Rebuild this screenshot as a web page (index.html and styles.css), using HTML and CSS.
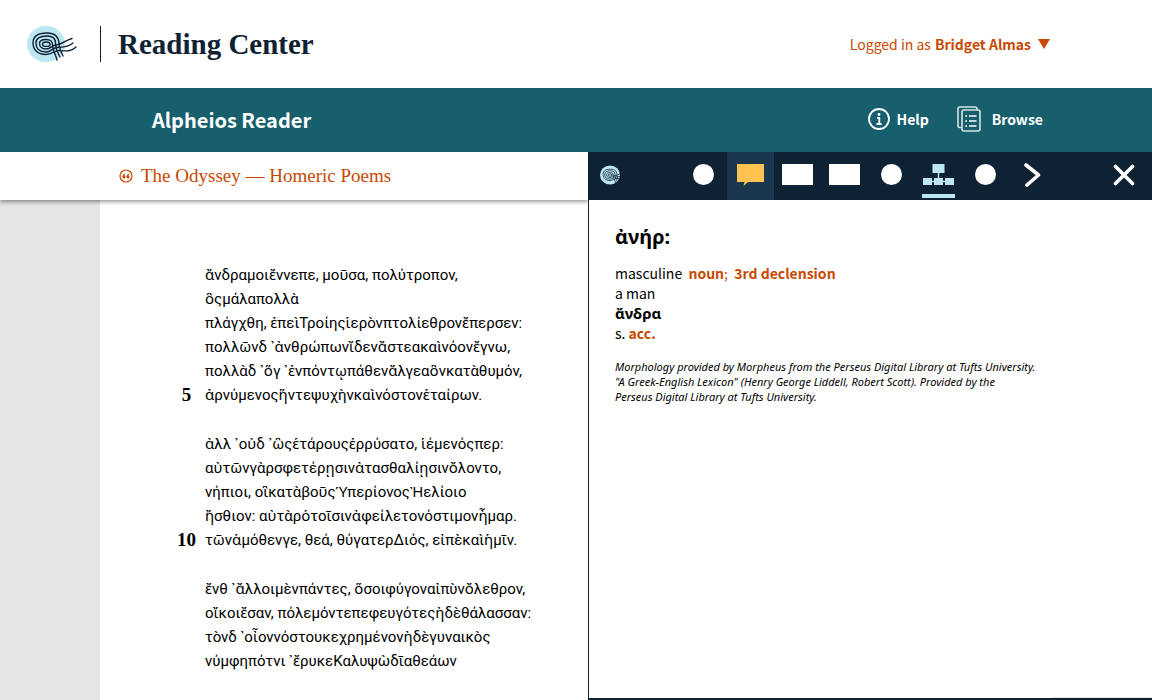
FILE: index.html
```html
<!DOCTYPE html>
<html lang="en">
<head>
<meta charset="utf-8">
<title>Reading Center</title>
<link rel="stylesheet" href="styles.css">
</head>
<body>
<svg class="defs" aria-hidden="true">
  <symbol id="swirl" viewBox="0 0 50 38">
    <ellipse cx="19" cy="19" rx="19" ry="18" fill="#bce6f0"/>
    <g fill="none" stroke="#0e2233" stroke-width="1.400" stroke-linecap="round">
      <path d="M49 22C44 27 38 26 32 25.500C28 25.500 25 29.500 19 29.500C10 29.500 6 24 6 18C6 10 12 8 20 8C28 8 31.500 11 32 18C32 23 34 27 36 31"/>
      <path d="M46 18C41 22 36 22.500 30 22.500C26 22.500 24 27 19 27C12 27 9 23 9 18C9 13 13 11 20 11C26 11 28.500 13 28.500 18C28.500 24 31 28 33 32"/>
      <path d="M45 13.500C39 15 35 19.500 29 20C25 20 24 24 19 24C15 24 12.500 21.500 12.500 18.500C12.500 15.500 15 14.500 19 14.500C24 14.500 25.500 16 25.500 20C26 27 29 30 30 35"/>
      <ellipse cx="19.300" cy="19.200" rx="3.800" ry="2.200"/>
    </g>
  </symbol>
</svg>

<header class="masthead">
  <svg class="brand-mark" viewBox="0 0 50 38" role="img" aria-label="Alpheios"><use href="#swirl"/></svg>
  <h1 class="brand-title">Reading Center</h1>
  <button class="account" type="button">Logged in as <b>Bridget Almas</b>
    <svg class="caret" viewBox="0 0 12 10" aria-hidden="true"><path d="M0 0H12L6 10Z" fill="#c84900"/></svg>
  </button>
</header>

<nav class="product-bar">
  <h2 class="product-name">Alpheios Reader</h2>
  <a class="nav-link help" href="#">
    <svg class="help-icon" viewBox="0 0 22 22" aria-hidden="true">
      <circle cx="11" cy="11" r="10" fill="none" stroke="#fff" stroke-width="1.800"/>
      <circle cx="11" cy="6.500" r="1.400" fill="#fff"/>
      <path d="M9 9.800H11.300V16M8.500 16H13.500" fill="none" stroke="#fff" stroke-width="1.800"/>
    </svg>Help</a>
  <a class="nav-link" href="#">
    <svg class="browse-icon" viewBox="0 0 24 26" aria-hidden="true">
      <g fill="none" stroke="#d5e4e8" stroke-width="1.600">
        <path d="M20 4V3Q20 1 18 1H3Q1 1 1 3V19.500Q1 21.500 3 21.500H4.500"/>
        <rect x="5" y="4" width="18" height="21" rx="2"/>
        <path d="M12 10H19.500M12 15H19.500M12 20H19.500" stroke="#fff"/>
        <path d="M8.300 10H10M8.300 15H10M8.300 20H10" stroke="#fff"/>
      </g>
    </svg>Browse</a>
</nav>

<div class="workspace">
  <main class="reader">
    <header class="reader-head">
      <svg class="quote-icon" viewBox="0 0 14 14" aria-hidden="true">
        <circle cx="7" cy="7" r="6" fill="none" stroke="#c84900" stroke-width="1.200"/>
        <g fill="#c84900"><circle cx="5" cy="8" r="1.500"/><circle cx="9" cy="8" r="1.500"/>
        <path d="M3.500 8Q3.500 5.200 6.200 4.600L5.200 7.500ZM7.500 8Q7.500 5.200 10.200 4.600L9.200 7.500Z"/></g>
      </svg>
      <a class="work-link" href="#">The Odyssey — Homeric Poems</a>
    </header>
    <div class="page">
      <article class="poem" lang="grc">
        <div class="stanza">
          <p class="verse">ἄνδραμοιἔννεπε, μοῦσα, πολύτροπον,<br>ὃςμάλαπολλὰ</p>
          <p class="verse">πλάγχθη, ἐπεὶΤροίηςἱερὸνπτολίεθρονἔπερσεν:</p>
          <p class="verse">πολλῶνδ ᾽ἀνθρώπωνἴδενἄστεακαὶνόονἔγνω,</p>
          <p class="verse">πολλὰδ ᾽ὅγ ᾽ἐνπόντῳπάθενἄλγεαὃνκατὰθυμόν,</p>
          <span class="number">5</span>
          <p class="verse">ἀρνύμενοςἥντεψυχὴνκαὶνόστονἑταίρων.</p>
        </div>
        <div class="stanza">
          <p class="verse">ἀλλ ᾽οὐδ ᾽ὣςἑτάρουςἐρρύσατο, ἱέμενόςπερ:</p>
          <p class="verse">αὐτῶνγὰρσφετέρῃσινἀτασθαλίῃσινὄλοντο,</p>
          <p class="verse">νήπιοι, οἳκατὰβοῦςὙπερίονοςἨελίοιο</p>
          <p class="verse">ἤσθιον: αὐτὰρὁτοῖσινἀφείλετονόστιμονἦμαρ.</p>
          <span class="number">10</span>
          <p class="verse">τῶνἁμόθενγε, θεά, θύγατερΔιός, εἰπὲκαὶἡμῖν.</p>
        </div>
        <div class="stanza">
          <p class="verse">ἔνθ ᾽ἄλλοιμὲνπάντες, ὅσοιφύγοναἰπὺνὄλεθρον,</p>
          <p class="verse">οἴκοιἔσαν, πόλεμόντεπεφευγότεςἠδὲθάλασσαν:</p>
          <p class="verse">τὸνδ ᾽οἶοννόστουκεχρημένονἠδὲγυναικὸς</p>
          <p class="verse">νύμφηπότνι ᾽ἔρυκεΚαλυψὼδῖαθεάων</p>
        </div>
      </article>
    </div>
  </main>

  <aside class="panel">
    <div class="toolbar">
      <svg class="panel-mark" viewBox="0 0 38 38" aria-hidden="true"><use href="#swirl" width="50" height="38"/></svg>
      <div class="tools">
        <button class="tool" type="button" aria-label="Morphology"><span class="dot"></span></button>
        <button class="tool active" type="button" aria-label="Definitions">
          <svg class="bubble" viewBox="0 0 27 22" aria-hidden="true"><path d="M0 0H27V18H11L6.500 22L7.500 18H0Z" fill="#ffc251"/></svg>
        </button>
        <button class="tool" type="button" aria-label="Inflections"><span class="slab"></span></button>
        <button class="tool" type="button" aria-label="Inflection browser"><span class="slab"></span></button>
        <button class="tool" type="button" aria-label="Grammar"><span class="dot"></span></button>
        <button class="tool current" type="button" aria-label="Tree diagram">
          <svg class="tree" viewBox="0 0 31 21" aria-hidden="true"><path d="M9.500 0H21.500V9H16.200V14H20V16.800H22V14H31V21H22V18.200H20V21H11V18.200H9V21H0V14H9V16.800H11V14H14.800V9H9.500Z" fill="#bce6f0"/></svg>
        </button>
        <button class="tool" type="button" aria-label="Word list"><span class="dot"></span></button>
        <button class="tool" type="button" aria-label="More">
          <svg class="more" viewBox="0 0 17 24" aria-hidden="true"><path d="M2 2L14.500 12L3 22" fill="none" stroke="#fff" stroke-width="3.600" stroke-linecap="round" stroke-linejoin="round"/></svg>
        </button>
      </div>
      <button class="close" type="button" aria-label="Close">
        <svg class="close-icon" viewBox="0 0 22 22" aria-hidden="true"><path d="M2.500 2.500L19.500 19.500M19.500 2.500L2.500 19.500" fill="none" stroke="#fff" stroke-width="3.600" stroke-linecap="round"/></svg>
      </button>
    </div>
    <section class="entry">
      <h3 class="lemma" lang="grc">ἀνήρ:</h3>
      <p class="line">masculine&nbsp; <span class="accent"><b>noun</b>;&nbsp; <b>3rd declension</b></span></p>
      <p class="line">a man</p>
      <p class="line form" lang="grc">ἄνδρα</p>
      <p class="line">s. <b class="accent">acc.</b></p>
      <p class="credits">Morphology provided by Morpheus from the Perseus Digital Library at Tufts University.<br>"A Greek-English Lexicon" (Henry George Liddell, Robert Scott). Provided by the<br>Perseus Digital Library at Tufts University.</p>
    </section>
  </aside>
</div>
</body>
</html>
```
FILE: styles.css
```css
:root {
  --navy: #0e2233;
  --teal: #185f6d;
  --sky: #bce6f0;
  --rust: #c84900;
  --sans: "Noto Sans CJK SC", "Noto Sans", sans-serif;
  --greek: "Noto Sans", "Open Sans", sans-serif;
  --serif: "Liberation Serif", serif;
}

* { box-sizing: border-box; }

body {
  margin: 0;
  height: 100vh;
  display: flex;
  flex-direction: column;
  overflow: hidden;
  background: #fff;
  color: #000;
  font: 14px/20px var(--sans);
}

h1, h2, h3, p { margin: 0; }
a { color: inherit; text-decoration: none; }
button { border: 0; padding: 0; background: none; color: inherit; font: inherit; cursor: pointer; }
svg { display: block; flex: none; }
.defs { position: absolute; width: 0; height: 0; }

.masthead {
  flex: none;
  display: flex;
  align-items: center;
  height: 88px;
  padding: 0 102px 0 27px;
}
.brand-mark { width: 50px; height: 38px; }
.brand-title {
  margin-left: 23px;
  padding-left: 17px;
  border-left: 1px solid var(--navy);
  color: var(--navy);
  font: bold 29px/36px var(--serif);
}
.account {
  display: flex;
  align-items: center;
  gap: 4px;
  margin-left: auto;
  color: var(--rust);
}
.caret { width: 12px; height: 10px; margin-left: 3px; }

.product-bar {
  flex: none;
  display: flex;
  align-items: center;
  height: 64px;
  padding: 0 109px 2px 152px;
  background: var(--teal);
  color: #fff;
}
.product-name { margin-right: auto; padding-top: 2px; font-size: 20px; line-height: 30px; }
.nav-link { display: flex; align-items: center; font-weight: bold; }
.help { margin-right: 28px; }
.help-icon { width: 22px; height: 22px; margin-right: 7px; }
.browse-icon { width: 24px; height: 26px; margin-right: 11px; }

.workspace { flex: 1; min-height: 0; display: grid; grid-template-columns: 588fr 564fr; }

.reader { display: flex; flex-direction: column; min-height: 0; min-width: 0; }
.reader-head {
  flex: none;
  z-index: 1;
  display: flex;
  align-items: center;
  gap: 8px;
  height: 48px;
  padding-left: 119px;
  background: #fff;
  box-shadow: 0 2px 4px rgba(0, 0, 0, .4);
  clip-path: inset(0 0 -8px 0);
  color: var(--rust);
  font: 19px/28px var(--serif);
}
.quote-icon { width: 14px; height: 14px; }
.page { flex: 1; min-height: 0; border-left: 100px solid #e5e5e5; }
.poem {
  display: flex;
  flex-direction: column;
  gap: 25px;
  padding: 63px 16px 0 68px;
  font: 15px/24px Roboto, var(--greek);
}
.stanza { display: grid; grid-template-columns: 37px 1fr; }
.verse { grid-column: 2; white-space: nowrap; }
.number { text-align: center; font: bold 19px/24px var(--serif); }

.panel {
  display: flex;
  flex-direction: column;
  min-width: 0;
  border-left: 1px solid var(--navy);
  border-bottom: 2px solid var(--navy);
}
.panel::after {
  content: "";
  width: 100px;
  height: 1px;
  margin: auto 0 0 auto;
  background: #e5e5e5;
}
.toolbar {
  flex: none;
  display: flex;
  align-items: center;
  height: 48px;
  padding: 0 16px 2px 11px;
  background: var(--navy);
}
.panel-mark { width: 20px; height: 20px; margin-right: 60px; }
.tools { display: flex; align-self: flex-start; }
.tool { position: relative; display: grid; place-items: center; width: 47px; height: 48px; padding-bottom: 3px; }
.tool.active { background: #1b364f; }
.tool.current::after {
  content: "";
  position: absolute;
  bottom: 2px;
  left: 7px;
  right: 7px;
  height: 4px;
  background: var(--sky);
}
.dot { width: 21px; height: 21px; border-radius: 50%; background: #fff; }
.slab { width: 31px; height: 21px; background: #fff; }
.bubble { width: 27px; height: 22px; }
.tree { width: 31px; height: 21px; }
.more { width: 17px; height: 24px; }
.close { display: grid; place-items: center; width: 24px; height: 46px; margin-left: auto; }
.close-icon { width: 22px; height: 22px; }

.entry { padding: 22px 26px; }
.lemma { margin-bottom: 11px; font: bold 20px/30px var(--greek); }
.form { font: bold 15px/20px var(--greek); }
.accent { color: var(--rust); }
.credits { margin-top: 16px; font: italic 11px/15px "Noto Sans", sans-serif; }
```
